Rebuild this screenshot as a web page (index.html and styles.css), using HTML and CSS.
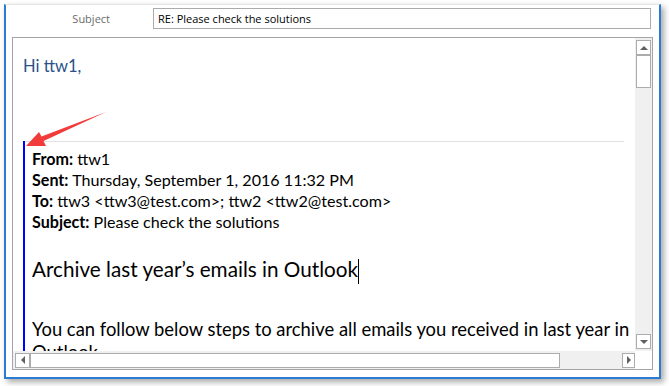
FILE: index.html
```html
<!DOCTYPE html>
<html lang="en">
<head>
  <meta charset="UTF-8">
  <title>RE: Please check the solutions</title>
  <link rel="stylesheet" href="styles.css">
</head>
<body>
  <div class="window">
      <div class="subject-row">
          <div class="subject-label">Subject</div>
          <div class="subject-box">RE: Please check the solutions</div>
      </div>

      <div class="frame">
          <div class="frame-main">
              <div class="body-content">
                  <p class="greeting">Hi ttw1,</p>
                  <div class="quote">
                      <div class="quote-head">
                          <div><b>From:</b> ttw1</div>
                          <div><b>Sent:</b> Thursday, September 1, 2016 11:32 PM</div>
                          <div><b>To:</b> ttw3 &lt;ttw3@test.com&gt;; ttw2 &lt;ttw2@test.com&gt;</div>
                          <div><b>Subject:</b> Please check the solutions</div>
                      </div>
                      <h1 class="quote-title">Archive last year’s emails in Outlook<span class="caret"></span></h1>
                      <p class="quote-text">You can follow below steps to archive all emails you received in last year in Outlook.</p>
                  </div>
              </div>
              <div class="vscroll">
                  <div class="sb-btn"><span class="tri tri-up"></span></div>
                  <div class="sb-thumb-v"></div>
                  <div class="sb-fill"></div>
                  <div class="sb-btn"><span class="tri tri-down"></span></div>
              </div>
          </div>
          <div class="hscroll">
              <div class="hscroll-track">
                  <div class="sb-btn"><span class="tri tri-left"></span></div>
                  <div class="sb-thumb-h"></div>
                  <div class="sb-fill"></div>
                  <div class="sb-btn sb-btn-narrow"><span class="tri tri-right"></span></div>
              </div>
              <div class="corner"></div>
          </div>
      </div>
  </div>

  <!-- callout arrow drawn over the page -->
  <svg class="pointer" width="669" height="386" viewBox="0 0 669 386">
      <polygon points="26,146 39,132 41.5,136.5 106,112 43.5,141 46,146" fill="#f23b3b"/>
  </svg>
</body>
</html>
```

FILE: styles.css
```css
* {
    box-sizing: border-box;
}

body {
    margin: 0;
    position: relative;
    width: 669px;
    height: 386px;
    overflow: hidden;
    background: #fff;
    font-family: 'Lato', 'Open Sans', sans-serif;
}

.window {
    margin: 4px 0 0 4px;
    width: 657px;
    height: 375px;
    background: #fff;
    border: 2px solid #2b7bd3;
    border-top: 1px solid #e4e4e4;
    box-shadow: 3px 3px 6px rgba(0, 0, 0, 0.35);
}

.subject-row {
    display: flex;
    align-items: center;
    margin-top: 3px;
    height: 21px;
}

.subject-label {
    width: 104px;
    margin-right: 43px;
    text-align: right;
    font-family: 'Open Sans', sans-serif;
    font-size: 11px;
    color: #6b6b6b;
}

.subject-box {
    flex: 1;
    height: 21px;
    margin-right: 8px;
    padding-left: 4px;
    border: 1px solid #ababab;
    font-family: 'Open Sans', sans-serif;
    font-size: 11px;
    line-height: 19px;
    color: #000;
}

.frame {
    margin: 8px 0 0 6px;
    width: 641px;
    height: 333px;
    border: 1px solid #a5a5a5;
    display: flex;
    flex-direction: column;
}

.frame-main {
    display: flex;
    height: 313px;
}

.body-content {
    flex: 1;
    overflow: hidden;
    padding-left: 10px;
}

.greeting {
    margin: 18px 0 0;
    font-size: 16.5px;
    line-height: 20px;
    color: #2a5189;
}

.quote {
    margin: 65px 11px 0 0;
    border-left: 2px solid #0000ff;
    color: #000;
}

.quote-head {
    border-top: 1px solid #e1e1e1;
    padding: 6px 0 0 7px;
    font-size: 16.1px;
    line-height: 21px;
}

.quote-title {
    margin: 24px 0 0;
    padding-left: 7px;
    font-size: 20.7px;
    font-weight: normal;
    line-height: 27px;
}

.caret {
    display: inline-block;
    width: 1px;
    height: 25px;
    background: #000;
    vertical-align: middle;
}

.quote-text {
    margin: 34px -11px 0 0;
    padding-left: 7px;
    font-size: 18.4px;
    line-height: 23px;
}

/* scrollbars */
.vscroll {
    width: 17px;
    padding: 2px 1px;
    background: #f0f0f0;
    display: flex;
    flex-direction: column;
}

.sb-btn {
    width: 15px;
    height: 15px;
    flex: none;
    border: 1px solid #acacac;
    background: #fff;
    display: flex;
    align-items: center;
    justify-content: center;
}

.sb-btn-narrow {
    width: 13px;
}

.sb-thumb-v {
    height: 33px;
    border: 1px solid #acacac;
    background: #fff;
}

.sb-fill {
    flex: 1;
}

.hscroll {
    display: flex;
    height: 18px;
}

.hscroll-track {
    flex: 1;
    display: flex;
    align-items: center;
    padding-left: 2px;
    background: #f0f0f0;
}

.sb-thumb-h {
    width: 530px;
    height: 15px;
    border: 1px solid #acacac;
    background: #fff;
}

.corner {
    width: 17px;
    background: #fff;
}

.tri {
    width: 0;
    height: 0;
    border: 4px solid transparent;
}

.tri-up {
    border-bottom-color: #606060;
    margin-top: -4px;
}

.tri-down {
    border-top-color: #606060;
    margin-top: 4px;
}

.tri-left {
    border-right-color: #606060;
    margin-left: -4px;
}

.tri-right {
    border-left-color: #606060;
    margin-left: 4px;
}

.pointer {
    position: absolute;
    left: 0;
    top: 0;
    pointer-events: none;
}
```
